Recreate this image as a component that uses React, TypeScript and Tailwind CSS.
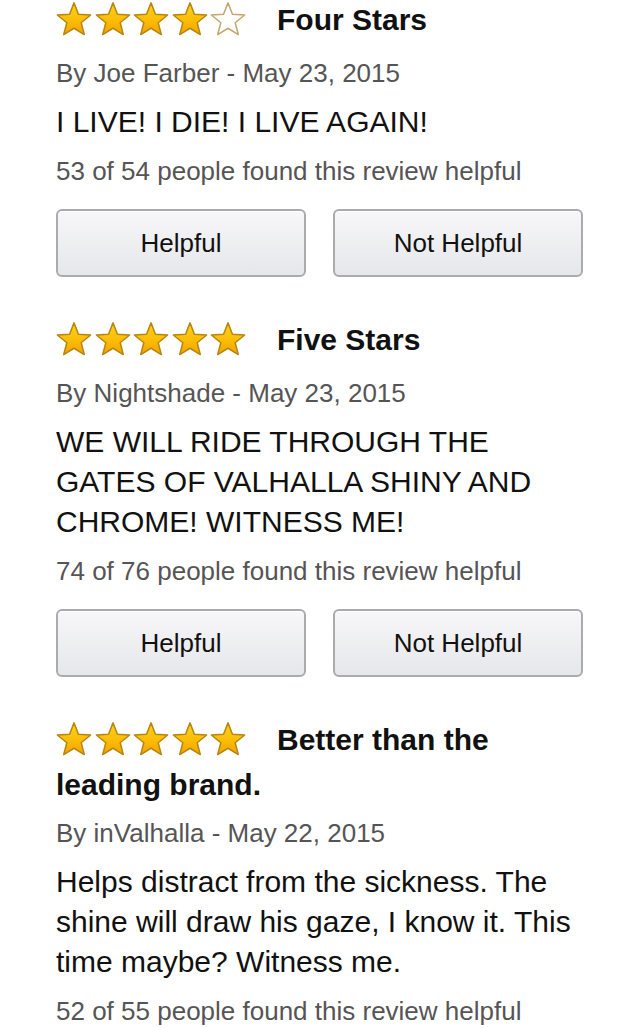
const reviews = [
  {
    rating: 4,
    title: "Four Stars",
    author: "Joe Farber",
    date: "May 23, 2015",
    body: "I LIVE! I DIE! I LIVE AGAIN!",
    helpful: "53 of 54",
    buttons: true,
  },
  {
    rating: 5,
    title: "Five Stars",
    author: "Nightshade",
    date: "May 23, 2015",
    body: "WE WILL RIDE THROUGH THE GATES OF VALHALLA SHINY AND CHROME! WITNESS ME!",
    helpful: "74 of 76",
    buttons: true,
  },
  {
    rating: 5,
    title: "Better than the leading brand.",
    author: "inValhalla",
    date: "May 22, 2015",
    body: "Helps distract from the sickness. The shine will draw his gaze, I know it. This time maybe? Witness me.",
    helpful: "52 of 55",
    buttons: false,
  },
];

const STAR_POINTS =
  "18,1 22.7,13.0 35.6,13.78 25.6,22.0 28.87,34.47 18,27.8 7.13,34.47 10.4,22.0 0.4,13.78 13.3,13.0";

const Star = ({ filled }: { filled: boolean }) => (
  <svg width="36" height="35" viewBox="-1 -1 38 37">
    <defs>
      <linearGradient id="starFill" x1="0" y1="0" x2="0" y2="1">
        <stop offset="0" stopColor="#ffd21a" />
        <stop offset="0.55" stopColor="#fbbd08" />
        <stop offset="1" stopColor="#f2a200" />
      </linearGradient>
    </defs>
    <polygon
      points={STAR_POINTS}
      fill={filled ? "url(#starFill)" : "#ffffff"}
      stroke={filled ? "#b8860e" : "#c6a66a"}
      strokeWidth="1.6"
      strokeLinejoin="round"
    />
  </svg>
);

const Stars = ({ rating }: { rating: number }) => (
  <span className="inline-flex gap-[2.5px] align-[-6px] mb-[9px] mr-[31px]">
    {[0, 1, 2, 3, 4].map((i) => (
      <Star key={i} filled={i < rating} />
    ))}
  </span>
);

const Button = ({ label }: { label: string }) => (
  <button className="h-[68px] rounded-[6px] border-2 border-[#ababad] bg-gradient-to-b from-[#f7f7f9] to-[#e6e7ea] text-[26px] text-[#111] shadow-[inset_0_1px_0_#fff]">
    {label}
  </button>
);

export default function App() {
  return (
    <div className="min-h-[1028px] bg-white px-[56px] font-['Liberation_Sans',Arial,sans-serif]">
      {reviews.map((r, i) => (
        <div key={i} className={i > 0 ? "mt-[43px]" : ""}>
          <div className="text-[30px] font-bold leading-[40px] text-[#111]">
            <Stars rating={r.rating} />
            {r.title}
          </div>
          <p className="mt-[10px] text-[26px] leading-[36px] text-[#555]">
            By {r.author} - {r.date}
          </p>
          <p className="mt-[11px] text-[30px] leading-[40px] text-[#111]">{r.body}</p>
          <p className="mt-[11px] text-[26px] leading-[36px] text-[#555]">
            {r.helpful} people found this review helpful
          </p>
          {r.buttons && (
            <div className="mt-[20px] grid grid-cols-2 gap-[27px]">
              <Button label="Helpful" />
              <Button label="Not Helpful" />
            </div>
          )}
        </div>
      ))}
    </div>
  );
}
